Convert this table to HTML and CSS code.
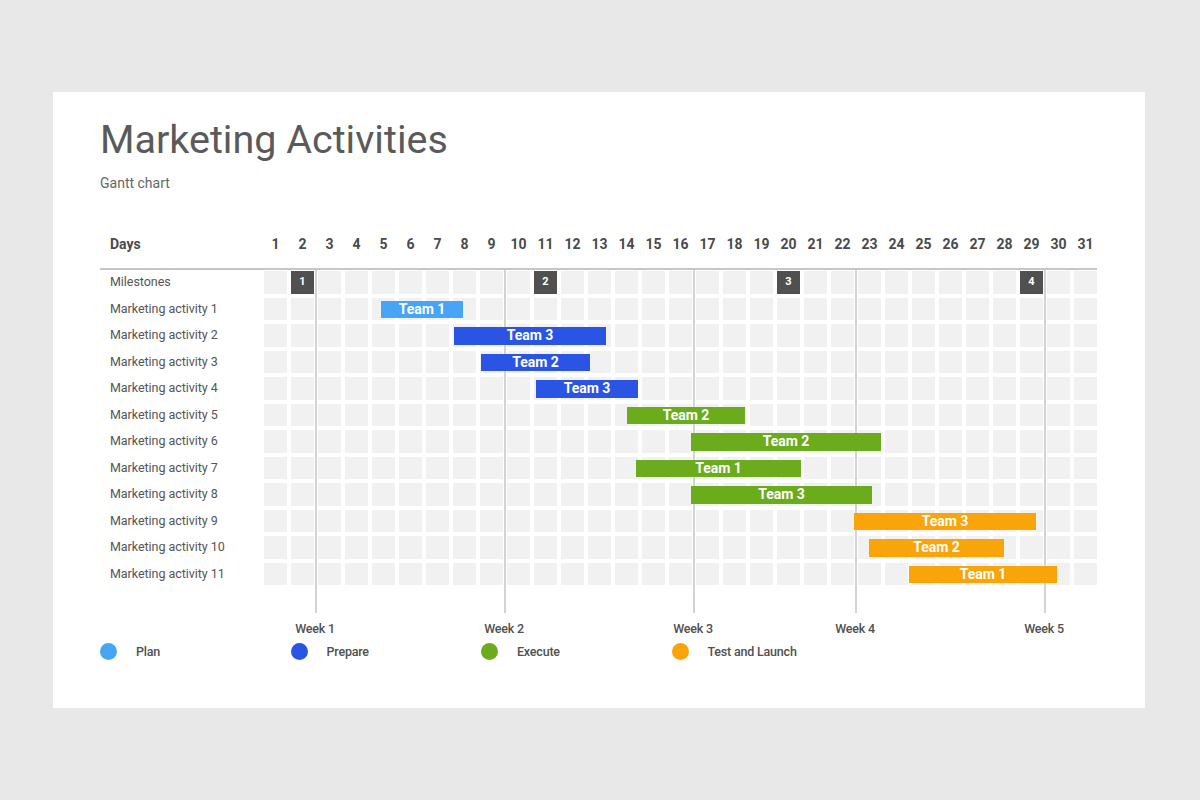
FILE: index.html
```html
<!DOCTYPE html>
<html lang="en">
<head>
<meta charset="utf-8">
<title>Marketing Activities</title>
<link rel="stylesheet" href="styles.css">
</head>
<body>
<div class="card">
  <h1 class="title">Marketing Activities</h1>
  <p class="subtitle">Gantt chart</p>

  <div class="chart">
    <div class="head">
      <div class="head-label">Days</div>
      <div class="days">
        <span>1</span><span>2</span><span>3</span><span>4</span><span>5</span><span>6</span><span>7</span><span>8</span><span>9</span><span>10</span><span>11</span><span>12</span><span>13</span><span>14</span><span>15</span><span>16</span><span>17</span><span>18</span><span>19</span><span>20</span><span>21</span><span>22</span><span>23</span><span>24</span><span>25</span><span>26</span><span>27</span><span>28</span><span>29</span><span>30</span><span>31</span>
      </div>
    </div>

    <div class="body">
      <div class="row">
        <div class="label">Milestones</div>
        <div class="track">
          <div class="ms" style="grid-column:2">1</div>
          <div class="ms" style="grid-column:11">2</div>
          <div class="ms" style="grid-column:20">3</div>
          <div class="ms" style="grid-column:29">4</div>
        </div>
      </div>
      <div class="row">
        <div class="label">Marketing activity 1</div>
        <div class="track"><div class="bar plan" style="left:117px;width:82px">Team 1</div></div>
      </div>
      <div class="row">
        <div class="label">Marketing activity 2</div>
        <div class="track"><div class="bar prepare" style="left:190px;width:152px">Team 3</div></div>
      </div>
      <div class="row">
        <div class="label">Marketing activity 3</div>
        <div class="track"><div class="bar prepare" style="left:217px;width:109px">Team 2</div></div>
      </div>
      <div class="row">
        <div class="label">Marketing activity 4</div>
        <div class="track"><div class="bar prepare" style="left:272px;width:102px">Team 3</div></div>
      </div>
      <div class="row">
        <div class="label">Marketing activity 5</div>
        <div class="track"><div class="bar execute" style="left:363px;width:118px">Team 2</div></div>
      </div>
      <div class="row">
        <div class="label">Marketing activity 6</div>
        <div class="track"><div class="bar execute" style="left:427px;width:190px">Team 2</div></div>
      </div>
      <div class="row">
        <div class="label">Marketing activity 7</div>
        <div class="track"><div class="bar execute" style="left:372px;width:165px">Team 1</div></div>
      </div>
      <div class="row">
        <div class="label">Marketing activity 8</div>
        <div class="track"><div class="bar execute" style="left:427px;width:181px">Team 3</div></div>
      </div>
      <div class="row">
        <div class="label">Marketing activity 9</div>
        <div class="track"><div class="bar launch" style="left:590px;width:182px">Team 3</div></div>
      </div>
      <div class="row">
        <div class="label">Marketing activity 10</div>
        <div class="track"><div class="bar launch" style="left:605px;width:135px">Team 2</div></div>
      </div>
      <div class="row">
        <div class="label">Marketing activity 11</div>
        <div class="track"><div class="bar launch" style="left:645px;width:148px">Team 1</div></div>
      </div>
      <div class="axis"></div>

      <div class="weeklines">
        <i style="left:51px"></i>
        <i style="left:240px"></i>
        <i style="left:429px"></i>
        <i style="left:591px"></i>
        <i style="left:780px"></i>
      </div>
    </div>

    <div class="weeks">
      <span style="left:51px">Week 1</span>
      <span style="left:240px">Week 2</span>
      <span style="left:429px">Week 3</span>
      <span style="left:591px">Week 4</span>
      <span style="left:780px">Week 5</span>
    </div>

    <div class="legend">
      <div class="item"><span class="dot plan"></span>Plan</div>
      <div class="item"><span class="dot prepare"></span>Prepare</div>
      <div class="item"><span class="dot execute"></span>Execute</div>
      <div class="item"><span class="dot launch"></span>Test and Launch</div>
    </div>
  </div>
</div>
</body>
</html>
```

FILE: styles.css
```css
* { box-sizing: border-box; }

html, body {
  margin: 0;
  padding: 0;
  background: #e9e8e9;
  font-family: Roboto, "Liberation Sans", Arial, sans-serif;
}

.card {
  width: 1092px;
  height: 616px;
  margin: 92px 0 0 53px;
  background: #ffffff;
  padding: 25px 48px 0 47px;
}

.title {
  margin: 0;
  font-size: 39.5px;
  line-height: 46px;
  font-weight: 400;
  color: #5a5a5a;
}

.subtitle {
  margin: 10.5px 0 0;
  font-size: 14px;
  line-height: 18px;
  color: #666;
}

.chart {
  width: 997px;
  margin-top: 43.5px;
}

.head {
  display: flex;
  gap: 4px;
  padding-bottom: 15px;
  border-bottom: 2px solid #c6c6c6;
  font-size: 14px;
  line-height: 18px;
  font-weight: 700;
  color: #4a4a4a;
}

.head-label {
  width: 160px;
  padding-left: 10px;
}

.days {
  display: grid;
  grid-template-columns: repeat(31, 23px);
  column-gap: 4px;
  text-align: center;
}

.body {
  position: relative;
  display: flex;
  flex-direction: column;
  gap: 4px;
  padding-top: 1px;
}

.row {
  display: flex;
  gap: 4px;
  height: 22.5px;
}

.label {
  width: 160px;
  padding-left: 10px;
  font-size: 12.5px;
  letter-spacing: -0.05px;
  line-height: 22.5px;
  color: #555;
  white-space: nowrap;
}

.track {
  position: relative;
  width: 833px;
  height: 22.5px;
  display: grid;
  grid-template-columns: repeat(31, 23px);
  column-gap: 4px;
  background: repeating-linear-gradient(to right, #f1f1f1 0 23px, transparent 23px 27px);
}

.ms {
  grid-row: 1;
  background: #505050;
  color: #fff;
  font-size: 11px;
  font-weight: 700;
  line-height: 22.5px;
  text-align: center;
  z-index: 2;
}

.bar {
  position: absolute;
  top: 3px;
  height: 17.5px;
  z-index: 2;
  color: #fff;
  font-size: 14px;
  font-weight: 700;
  line-height: 17.5px;
  text-align: center;
  white-space: nowrap;
}

.plan { background: #48a4f4; }
.prepare { background: #2a55e4; }
.execute { background: #6aac1c; }
.launch { background: #faa40b; }

.axis {
  height: 23.5px;
}

.weeklines {
  position: absolute;
  left: 164px;
  top: 0;
  bottom: 0;
  width: 833px;
  z-index: 1;
  pointer-events: none;
}

.weeklines i {
  position: absolute;
  top: 0;
  bottom: 0;
  width: 2px;
  background: #d3d3d3;
}

.weeks {
  position: relative;
  margin: 8px 0 0 164px;
  height: 16px;
  font-size: 12.5px;
  line-height: 16px;
  font-weight: 500;
  letter-spacing: -0.2px;
  color: #505050;
}

.weeks span {
  position: absolute;
  top: 0;
  transform: translateX(-50%);
  white-space: nowrap;
}

.legend {
  display: flex;
  margin-top: 6px;
  height: 17px;
}

.item {
  display: flex;
  align-items: center;
  width: 190.5px;
  font-size: 12.5px;
  font-weight: 500;
  letter-spacing: -0.2px;
  color: #505050;
}

.dot {
  width: 17px;
  height: 17px;
  border-radius: 50%;
  margin-right: 19px;
  flex: none;
}
```
